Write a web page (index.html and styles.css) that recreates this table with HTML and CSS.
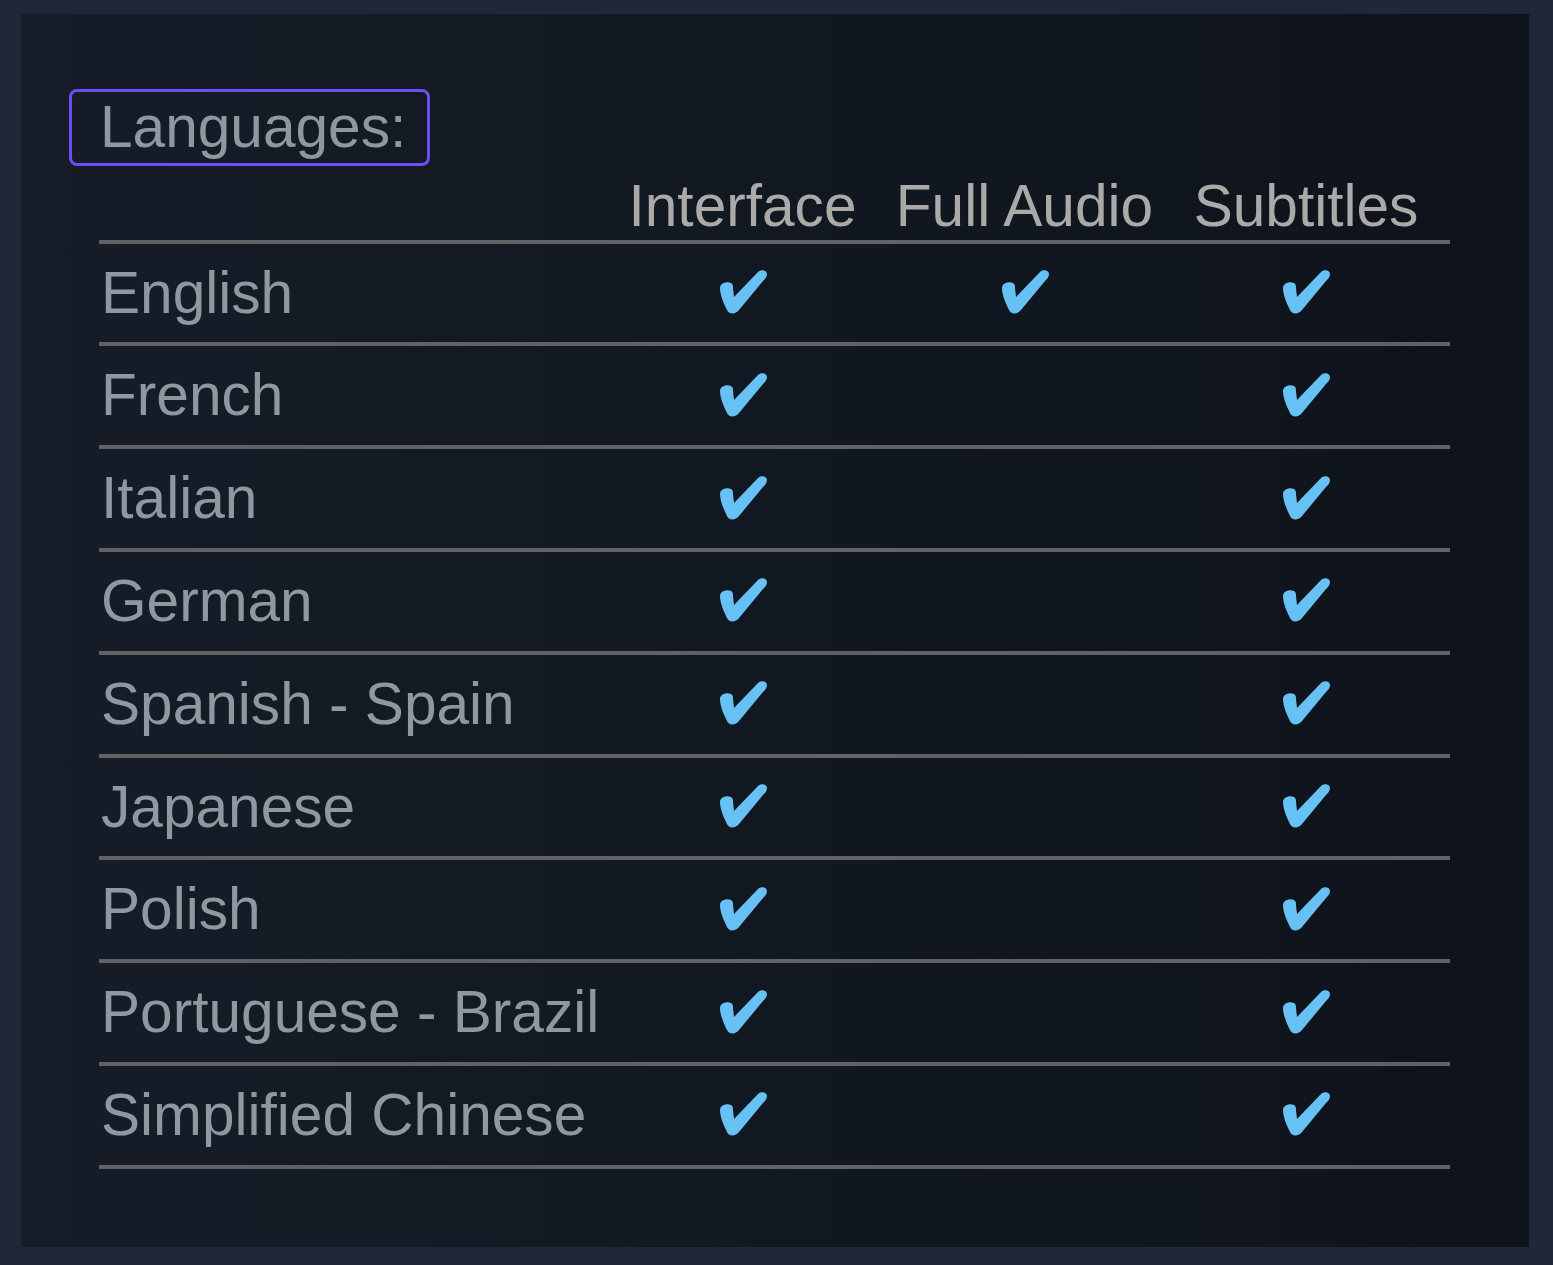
FILE: index.html
```html
<!DOCTYPE html>
<html lang="en">
<head>
  <meta charset="UTF-8" />
  <meta name="viewport" content="width=device-width, initial-scale=1.0"/>
  <title>Languages</title>
  <link rel="stylesheet" href="styles.css">
</head>
<body>
  <section class="panel">
    <h2 class="legend">Languages:</h2>

    <table class="lang-table">
      <colgroup>
        <col class="col-name">
        <col class="col-interface">
        <col class="col-audio">
        <col class="col-subs">
      </colgroup>
      <thead>
        <tr>
          <th></th>
          <th>Interface</th>
          <th>Full Audio</th>
          <th>Subtitles</th>
        </tr>
      </thead>
      <tbody>
        <tr>
          <td class="name">English</td>
          <td class="check"><svg class="tick" viewBox="0 0 50 46"><path d="M2,19 C2,14 9,12 13,14 C15,15 15,17 15,19 L16,28 L40,3 C43,0 49,1 49,5 C49,8 47,10 45,12 L21,41 C18,45 11,46 9,41 C6,35 2,26 2,19 Z"/></svg></td>
          <td class="check"><svg class="tick" viewBox="0 0 50 46"><path d="M2,19 C2,14 9,12 13,14 C15,15 15,17 15,19 L16,28 L40,3 C43,0 49,1 49,5 C49,8 47,10 45,12 L21,41 C18,45 11,46 9,41 C6,35 2,26 2,19 Z"/></svg></td>
          <td class="check"><svg class="tick" viewBox="0 0 50 46"><path d="M2,19 C2,14 9,12 13,14 C15,15 15,17 15,19 L16,28 L40,3 C43,0 49,1 49,5 C49,8 47,10 45,12 L21,41 C18,45 11,46 9,41 C6,35 2,26 2,19 Z"/></svg></td>
        </tr>
        <tr>
          <td class="name">French</td>
          <td class="check"><svg class="tick" viewBox="0 0 50 46"><path d="M2,19 C2,14 9,12 13,14 C15,15 15,17 15,19 L16,28 L40,3 C43,0 49,1 49,5 C49,8 47,10 45,12 L21,41 C18,45 11,46 9,41 C6,35 2,26 2,19 Z"/></svg></td>
          <td class="check"></td>
          <td class="check"><svg class="tick" viewBox="0 0 50 46"><path d="M2,19 C2,14 9,12 13,14 C15,15 15,17 15,19 L16,28 L40,3 C43,0 49,1 49,5 C49,8 47,10 45,12 L21,41 C18,45 11,46 9,41 C6,35 2,26 2,19 Z"/></svg></td>
        </tr>
        <tr>
          <td class="name">Italian</td>
          <td class="check"><svg class="tick" viewBox="0 0 50 46"><path d="M2,19 C2,14 9,12 13,14 C15,15 15,17 15,19 L16,28 L40,3 C43,0 49,1 49,5 C49,8 47,10 45,12 L21,41 C18,45 11,46 9,41 C6,35 2,26 2,19 Z"/></svg></td>
          <td class="check"></td>
          <td class="check"><svg class="tick" viewBox="0 0 50 46"><path d="M2,19 C2,14 9,12 13,14 C15,15 15,17 15,19 L16,28 L40,3 C43,0 49,1 49,5 C49,8 47,10 45,12 L21,41 C18,45 11,46 9,41 C6,35 2,26 2,19 Z"/></svg></td>
        </tr>
        <tr>
          <td class="name">German</td>
          <td class="check"><svg class="tick" viewBox="0 0 50 46"><path d="M2,19 C2,14 9,12 13,14 C15,15 15,17 15,19 L16,28 L40,3 C43,0 49,1 49,5 C49,8 47,10 45,12 L21,41 C18,45 11,46 9,41 C6,35 2,26 2,19 Z"/></svg></td>
          <td class="check"></td>
          <td class="check"><svg class="tick" viewBox="0 0 50 46"><path d="M2,19 C2,14 9,12 13,14 C15,15 15,17 15,19 L16,28 L40,3 C43,0 49,1 49,5 C49,8 47,10 45,12 L21,41 C18,45 11,46 9,41 C6,35 2,26 2,19 Z"/></svg></td>
        </tr>
        <tr>
          <td class="name">Spanish - Spain</td>
          <td class="check"><svg class="tick" viewBox="0 0 50 46"><path d="M2,19 C2,14 9,12 13,14 C15,15 15,17 15,19 L16,28 L40,3 C43,0 49,1 49,5 C49,8 47,10 45,12 L21,41 C18,45 11,46 9,41 C6,35 2,26 2,19 Z"/></svg></td>
          <td class="check"></td>
          <td class="check"><svg class="tick" viewBox="0 0 50 46"><path d="M2,19 C2,14 9,12 13,14 C15,15 15,17 15,19 L16,28 L40,3 C43,0 49,1 49,5 C49,8 47,10 45,12 L21,41 C18,45 11,46 9,41 C6,35 2,26 2,19 Z"/></svg></td>
        </tr>
        <tr>
          <td class="name">Japanese</td>
          <td class="check"><svg class="tick" viewBox="0 0 50 46"><path d="M2,19 C2,14 9,12 13,14 C15,15 15,17 15,19 L16,28 L40,3 C43,0 49,1 49,5 C49,8 47,10 45,12 L21,41 C18,45 11,46 9,41 C6,35 2,26 2,19 Z"/></svg></td>
          <td class="check"></td>
          <td class="check"><svg class="tick" viewBox="0 0 50 46"><path d="M2,19 C2,14 9,12 13,14 C15,15 15,17 15,19 L16,28 L40,3 C43,0 49,1 49,5 C49,8 47,10 45,12 L21,41 C18,45 11,46 9,41 C6,35 2,26 2,19 Z"/></svg></td>
        </tr>
        <tr>
          <td class="name">Polish</td>
          <td class="check"><svg class="tick" viewBox="0 0 50 46"><path d="M2,19 C2,14 9,12 13,14 C15,15 15,17 15,19 L16,28 L40,3 C43,0 49,1 49,5 C49,8 47,10 45,12 L21,41 C18,45 11,46 9,41 C6,35 2,26 2,19 Z"/></svg></td>
          <td class="check"></td>
          <td class="check"><svg class="tick" viewBox="0 0 50 46"><path d="M2,19 C2,14 9,12 13,14 C15,15 15,17 15,19 L16,28 L40,3 C43,0 49,1 49,5 C49,8 47,10 45,12 L21,41 C18,45 11,46 9,41 C6,35 2,26 2,19 Z"/></svg></td>
        </tr>
        <tr>
          <td class="name">Portuguese - Brazil</td>
          <td class="check"><svg class="tick" viewBox="0 0 50 46"><path d="M2,19 C2,14 9,12 13,14 C15,15 15,17 15,19 L16,28 L40,3 C43,0 49,1 49,5 C49,8 47,10 45,12 L21,41 C18,45 11,46 9,41 C6,35 2,26 2,19 Z"/></svg></td>
          <td class="check"></td>
          <td class="check"><svg class="tick" viewBox="0 0 50 46"><path d="M2,19 C2,14 9,12 13,14 C15,15 15,17 15,19 L16,28 L40,3 C43,0 49,1 49,5 C49,8 47,10 45,12 L21,41 C18,45 11,46 9,41 C6,35 2,26 2,19 Z"/></svg></td>
        </tr>
        <tr>
          <td class="name">Simplified Chinese</td>
          <td class="check"><svg class="tick" viewBox="0 0 50 46"><path d="M2,19 C2,14 9,12 13,14 C15,15 15,17 15,19 L16,28 L40,3 C43,0 49,1 49,5 C49,8 47,10 45,12 L21,41 C18,45 11,46 9,41 C6,35 2,26 2,19 Z"/></svg></td>
          <td class="check"></td>
          <td class="check"><svg class="tick" viewBox="0 0 50 46"><path d="M2,19 C2,14 9,12 13,14 C15,15 15,17 15,19 L16,28 L40,3 C43,0 49,1 49,5 C49,8 47,10 45,12 L21,41 C18,45 11,46 9,41 C6,35 2,26 2,19 Z"/></svg></td>
        </tr>
      </tbody>
    </table>
  </section>
</body>
</html>
```

FILE: styles.css
```css
:root {
  --frame-color: #1e2838;
  --panel-left: #161d28;
  --panel-right: #0e131b;
  --label-color: #8f98a0;
  --head-color: #acaaa9;
  --rule-color: #606266;
  --accent: #6a4ff4;
  --tick-color: #67c1f5;
}

* {
  margin: 0;
  padding: 0;
  box-sizing: border-box;
  font-family: 'Liberation Sans', Arial, sans-serif;
}

body {
  background: var(--frame-color);
  padding: 14px 24px 18px 21px;
}

.panel {
  width: 1508px;
  height: 1233px;
  padding: 75px 0 0 48px;
  background: linear-gradient(90deg, var(--panel-left) 0%, var(--panel-right) 100%);
}

.legend {
  display: inline-block;
  font-size: 58.6px;
  font-weight: normal;
  line-height: 66.8px;
  color: var(--label-color);
  border: 3px solid var(--accent);
  border-radius: 8px;
  padding: 2px 21px 2px 28px;
}

.lang-table {
  width: 1351px;
  margin: 7px 0 0 30px;
  table-layout: fixed;
  border-collapse: separate;
  border-spacing: 0;
}
.col-name { width: 499px; }
.col-interface { width: 289px; }
.col-audio { width: 275px; }
.col-subs { width: 288px; }

th, td {
  font-size: 58.6px;
  font-weight: normal;
  line-height: 66.8px;
  border-bottom: 4px solid var(--rule-color);
  white-space: nowrap;
}
th {
  color: var(--head-color);
  text-align: center;
  padding: 0;
}
td {
  color: var(--label-color);
  padding: 16px 0;
}
td.name {
  text-align: left;
  padding-left: 2px;
}
td.check {
  text-align: center;
}

.tick {
  width: 50px;
  height: 46px;
  vertical-align: -2.5px;
  fill: var(--tick-color);
}
```
